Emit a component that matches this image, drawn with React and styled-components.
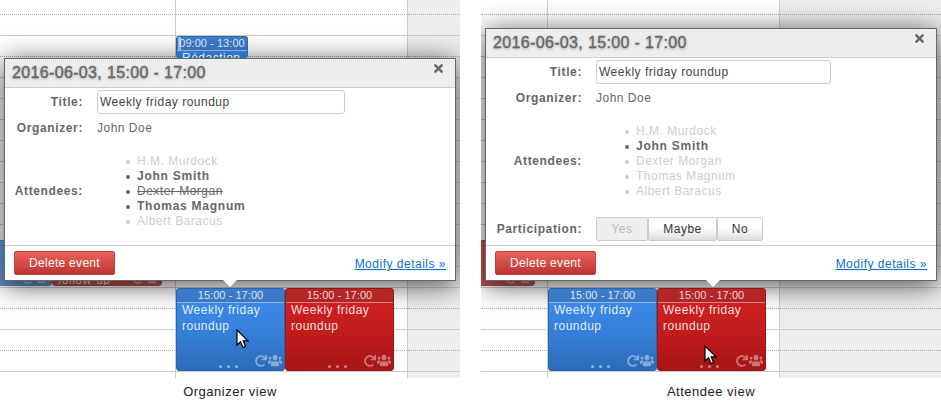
import React from 'react';
import styled, { createGlobalStyle } from 'styled-components';
import { FaTimes, FaRedo, FaUsers } from 'react-icons/fa';

const GlobalStyle = createGlobalStyle`
  html, body {
    margin: 0;
    padding: 0;
    background: #fff;
    overflow: hidden;
  }
  body {
    font-family: "Liberation Sans", Arial, sans-serif;
    font-size: 12px;
    letter-spacing: 0.5px;
    color: #666;
  }
`;

const Page = styled.div`
  display: flex;
  gap: 21px;
  width: 941px;
`;

const View = styled.section`
  display: flex;
  flex-direction: column;
  width: 460px;
`;

const Caption = styled.div`
  text-align: center;
  font-size: 13px;
  letter-spacing: 0.5px;
  line-height: 27px;
  color: #222;
`;

const Calendar = styled.div`
  position: relative;
  display: flex;
  height: 378px;
  overflow: hidden;
`;

const Column = styled.div`
  box-sizing: border-box;
  display: flex;
  flex-direction: column;
  flex: ${(p) => (p.$width ? `0 0 ${p.$width}px` : '1')};
  background: ${(p) => (p.$weekend ? '#ededed' : '#fff')};
  border-right: ${(p) => (p.$weekend ? 'none' : '1px solid #ccc')};
`;

const Slot = styled.div`
  flex: 0 0 ${(p) => p.$height}px;
  box-sizing: border-box;
  border-bottom: 1px ${(p) => (p.$major ? 'solid #ccc' : 'dotted #aaa')};
`;

const Filler = styled.div`
  flex: 1;
`;

const Event = styled.div`
  position: absolute;
  z-index: ${(p) => (p.$dim ? 0 : 2)};
  left: ${(p) => p.$left}px;
  top: ${(p) => p.$top}px;
  width: ${(p) => p.$width}px;
  height: ${(p) => p.$height}px;
  box-sizing: border-box;
  display: flex;
  flex-direction: column;
  overflow: hidden;
  color: #fff;
  opacity: ${(p) => (p.$dim ? 0.75 : 1)};
  border: 1px solid ${(p) => (p.$red ? '#9c1414' : '#2a66ad')};
  border-bottom-width: ${(p) => (p.$tucked ? 0 : 1)}px;
  border-radius: 3px;
  background: ${(p) =>
    p.$red
      ? 'linear-gradient(#d52222, #c11c1c 55%, #a51515)'
      : 'linear-gradient(#3d8ded, #357fd8 55%, #2c6bb8)'};
`;

const EventTime = styled.div`
  flex: 0 0 13px;
  font-size: 11px;
  letter-spacing: 0.05px;
  line-height: 13px;
  white-space: nowrap;
  text-align: center;
  color: rgba(255, 255, 255, 0.8);
  background: rgba(60, 60, 60, 0.2);
  border-bottom: 1px solid rgba(255, 255, 255, 0.45);
`;

const EventTitle = styled.div`
  padding: 0 20px 0 5px;
  margin-top: ${(p) => p.$offset || 0}px;
  line-height: 15.5px;
  color: rgba(255, 255, 255, 0.88);
`;

const EventIcons = styled.div`
  position: absolute;
  right: 2px;
  bottom: ${(p) => p.$bottom}px;
  display: flex;
  align-items: flex-end;
  gap: 1px;
  color: rgba(255, 255, 255, 0.42);
`;

const UsersIcon = styled(FaUsers)`
  display: block;
  width: 14px;
  height: 13px;
`;

const RedoIcon = styled(FaRedo)`
  display: block;
  width: 12px;
  height: 12px;
`;

const EventDots = styled.div`
  position: absolute;
  left: 0;
  right: 5px;
  bottom: 2px;
  display: flex;
  justify-content: center;
  gap: 5px;
  > i {
    width: 3px;
    height: 3px;
    border-radius: 50%;
    background: rgba(255, 255, 255, 0.45);
  }
`;

const Stripe = styled.div`
  position: absolute;
  left: 1px;
  top: 0;
  width: 3px;
  height: 13px;
  background: rgba(255, 255, 255, 0.5);
`;

const Modal = styled.div`
  position: absolute;
  z-index: 1;
  left: ${(p) => p.$left}px;
  top: ${(p) => p.$top}px;
  width: 452px;
  bottom: 97px;
  box-sizing: border-box;
  display: flex;
  flex-direction: column;
  background: #fff;
  border: 1px solid #666;
  box-shadow: 0 4px 26px rgba(0, 0, 0, 0.7);
`;

const Arrow = styled.div`
  position: absolute;
  left: ${(p) => p.$left}px;
  bottom: -7px;
  width: 0;
  height: 0;
  border-left: 7px solid transparent;
  border-right: 7px solid transparent;
  border-top: 7px solid #fff;
`;

const ModalHeader = styled.header`
  flex: 0 0 28px;
  display: flex;
  align-items: center;
  justify-content: space-between;
  padding: 0 10px 0 7px;
  background: #ededed;
  border-bottom: 1px solid #ccc;
  color: #666;
  > svg {
    margin-top: -9px;
  }
`;

const ModalTitle = styled.h1`
  margin: 0;
  font-size: 16px;
  font-weight: normal;
  letter-spacing: 0.35px;
  -webkit-text-stroke: 0.3px #666;
  text-shadow: 0 1px 3px rgba(0, 0, 0, 0.35);
`;

const ModalBody = styled.div`
  flex: 1;
  display: flex;
  flex-direction: column;
  padding-top: 2px;
`;

const Row = styled.div`
  display: flex;
  align-items: center;
  gap: 14px;
  margin-top: ${(p) => p.$gap || 0}px;
`;

const Label = styled.label`
  flex: 0 0 ${(p) => p.$width}px;
  text-align: right;
  font-weight: bold;
  letter-spacing: 0.62px;
  line-height: 15px;
`;

const TitleInput = styled.input`
  box-sizing: border-box;
  width: ${(p) => p.$width}px;
  height: 24px;
  padding: 0 2px 1px;
  font: inherit;
  letter-spacing: inherit;
  color: #444;
  background: #fff;
  border: 1px solid #ccc;
  border-radius: 3px;
  outline: none;
`;

const Value = styled.span`
  line-height: 15px;
`;

const AttendeeList = styled.ul`
  margin: 0;
  padding: 0 0 0 29px;
  list-style: none;
`;

const Attendee = styled.li`
  position: relative;
  padding-left: 11px;
  line-height: 15px;
  color: ${(p) => (p.$state === 'pending' ? '#ccc' : '#666')};
  font-weight: ${(p) => (p.$state === 'accepted' ? 'bold' : 'normal')};
  letter-spacing: ${(p) => (p.$state === 'accepted' ? 0.75 : 0.5)}px;
  text-decoration: ${(p) => (p.$state === 'declined' ? 'line-through' : 'none')};
  &::before {
    content: '';
    position: absolute;
    left: 0;
    top: 6px;
    width: 4px;
    height: 4px;
    border-radius: 50%;
    background: currentColor;
  }
`;

const ButtonGroup = styled.div`
  display: flex;
`;

const Choice = styled.button`
  box-sizing: border-box;
  width: ${(p) => p.$width}px;
  height: 24px;
  padding: 0;
  font: inherit;
  letter-spacing: inherit;
  color: ${(p) => (p.disabled ? '#bbb' : '#333')};
  background: ${(p) => (p.disabled ? '#eee' : 'linear-gradient(#fff, #fff 40%, #ddd)')};
  border: 1px solid #ccc;
  border-radius: 2px;
`;

const ModalFooter = styled.footer`
  flex: 0 0 35px;
  box-sizing: border-box;
  display: flex;
  align-items: flex-start;
  justify-content: space-between;
  padding: 5px 9px 0;
  border-top: 1px solid #ccc;
`;

const DeleteButton = styled.button`
  box-sizing: border-box;
  width: 101px;
  height: 24px;
  padding: 0 0 1px;
  font: inherit;
  letter-spacing: 0.3px;
  color: #fff;
  background: linear-gradient(#ec625c, #bb3530);
  border: 1px solid #c4413c;
  border-radius: 2px;
`;

const ModifyLink = styled.a`
  margin-top: 6px;
  line-height: 15px;
  letter-spacing: 0.5px;
  color: #0b6fd0;
  text-decoration: underline;
`;

const CursorMark = styled.svg`
  position: absolute;
  z-index: 3;
  left: ${(p) => p.$left}px;
  top: ${(p) => p.$top}px;
`;

const Cursor = ({ left, top }) => (
  <CursorMark $left={left} $top={top} width="13" height="20" viewBox="0 0 13 20">
    <path d="M1 1v15l3.5-3.3L7 18.5l2.6-1.1-2.4-5.6H12z" fill="#fff" stroke="#000" strokeWidth="1.2" />
  </CursorMark>
);

const slots = Array.from({ length: 18 }, (_, i) => ({ major: i % 2 === 1, height: i === 0 ? 15 : 21 }));

const DayColumn = ({ width, weekend }) => (
  <Column $width={width} $weekend={weekend}>
    {slots.map((s, i) => (
      <Slot key={i} $major={s.major} $height={s.height} />
    ))}
    <Filler />
  </Column>
);

const Icons = ({ bottom }) => (
  <EventIcons $bottom={bottom}>
    <RedoIcon />
    <UsersIcon preserveAspectRatio="none" />
  </EventIcons>
);

const RoundupEvent = ({ left, red }) => (
  <Event $left={left} $top={288} $width={109} $height={83} $red={red}>
    <EventTime>15:00 - 17:00</EventTime>
    <EventTitle>Weekly friday roundup</EventTitle>
    <Icons bottom={3} />
    <EventDots>
      <i />
      <i />
      <i />
    </EventDots>
  </Event>
);

const organizerAttendees = [
  ['H.M. Murdock', 'pending'],
  ['John Smith', 'accepted'],
  ['Dexter Morgan', 'declined'],
  ['Thomas Magnum', 'accepted'],
  ['Albert Baracus', 'pending'],
];

const attendeeAttendees = [
  ['H.M. Murdock', 'pending'],
  ['John Smith', 'accepted'],
  ['Dexter Morgan', 'pending'],
  ['Thomas Magnum', 'pending'],
  ['Albert Baracus', 'pending'],
];

const EventModal = ({ left, top, labelWidth, inputWidth, attendees, arrow, children }) => (
  <Modal $left={left} $top={top}>
    <Arrow $left={arrow} />
    <ModalHeader>
      <ModalTitle>2016-06-03, 15:00 - 17:00</ModalTitle>
      <FaTimes size={13} />
    </ModalHeader>
    <ModalBody>
      <Row>
        <Label $width={labelWidth}>Title:</Label>
        <TitleInput $width={inputWidth} readOnly value="Weekly friday roundup" />
      </Row>
      <Row $gap={7}>
        <Label $width={labelWidth}>Organizer:</Label>
        <Value>John Doe</Value>
      </Row>
      <Row $gap={18}>
        <Label $width={labelWidth}>Attendees:</Label>
        <AttendeeList>
          {attendees.map(([name, state]) => (
            <Attendee key={name} $state={state}>
              {name}
            </Attendee>
          ))}
        </AttendeeList>
      </Row>
      {children}
    </ModalBody>
    <ModalFooter>
      <DeleteButton>Delete event</DeleteButton>
      <ModifyLink href="#">Modify details »</ModifyLink>
    </ModalFooter>
  </Modal>
);

export default function App() {
  return (
    <Page>
      <GlobalStyle />
      <View>
        <Calendar>
          <DayColumn width={176} />
          <DayColumn width={232} />
          <DayColumn weekend />
          <Event $dim $left={-10} $top={240} $width={62} $height={46}>
            <Icons bottom={1} />
          </Event>
          <Event $dim $red $left={52} $top={240} $width={110} $height={46}>
            <EventTitle $offset={32}>follow-up</EventTitle>
            <Icons bottom={1} />
          </Event>
          <Event $tucked $left={176} $top={36} $width={72} $height={22}>
            <Stripe />
            <EventTime>09:00 - 13:00</EventTime>
            <EventTitle>Rédaction</EventTitle>
          </Event>
          <EventModal
            left={4}
            top={58}
            labelWidth={78}
            inputWidth={248}
            attendees={organizerAttendees}
            arrow={218}
          />
          <RoundupEvent left={176} />
          <RoundupEvent left={285} red />
          <Cursor left={236} top={329} />
        </Calendar>
        <Caption>Organizer view</Caption>
      </View>
      <View>
        <Calendar>
          <DayColumn width={67} />
          <DayColumn width={232} />
          <DayColumn weekend />
          <Event $dim $red $left={-50} $top={240} $width={104} $height={46}>
            <Icons bottom={1} />
          </Event>
          <EventModal
            left={4}
            top={28}
            labelWidth={96}
            inputWidth={235}
            attendees={attendeeAttendees}
            arrow={220}
          >
            <Row $gap={18}>
              <Label $width={96}>Participation:</Label>
              <ButtonGroup>
                <Choice disabled $width={52}>Yes</Choice>
                <Choice $width={69}>Maybe</Choice>
                <Choice $width={46}>No</Choice>
              </ButtonGroup>
            </Row>
          </EventModal>
          <RoundupEvent left={67} />
          <RoundupEvent left={176} red />
          <Cursor left={223} top={345} />
        </Calendar>
        <Caption>Attendee view</Caption>
      </View>
    </Page>
  );
}
